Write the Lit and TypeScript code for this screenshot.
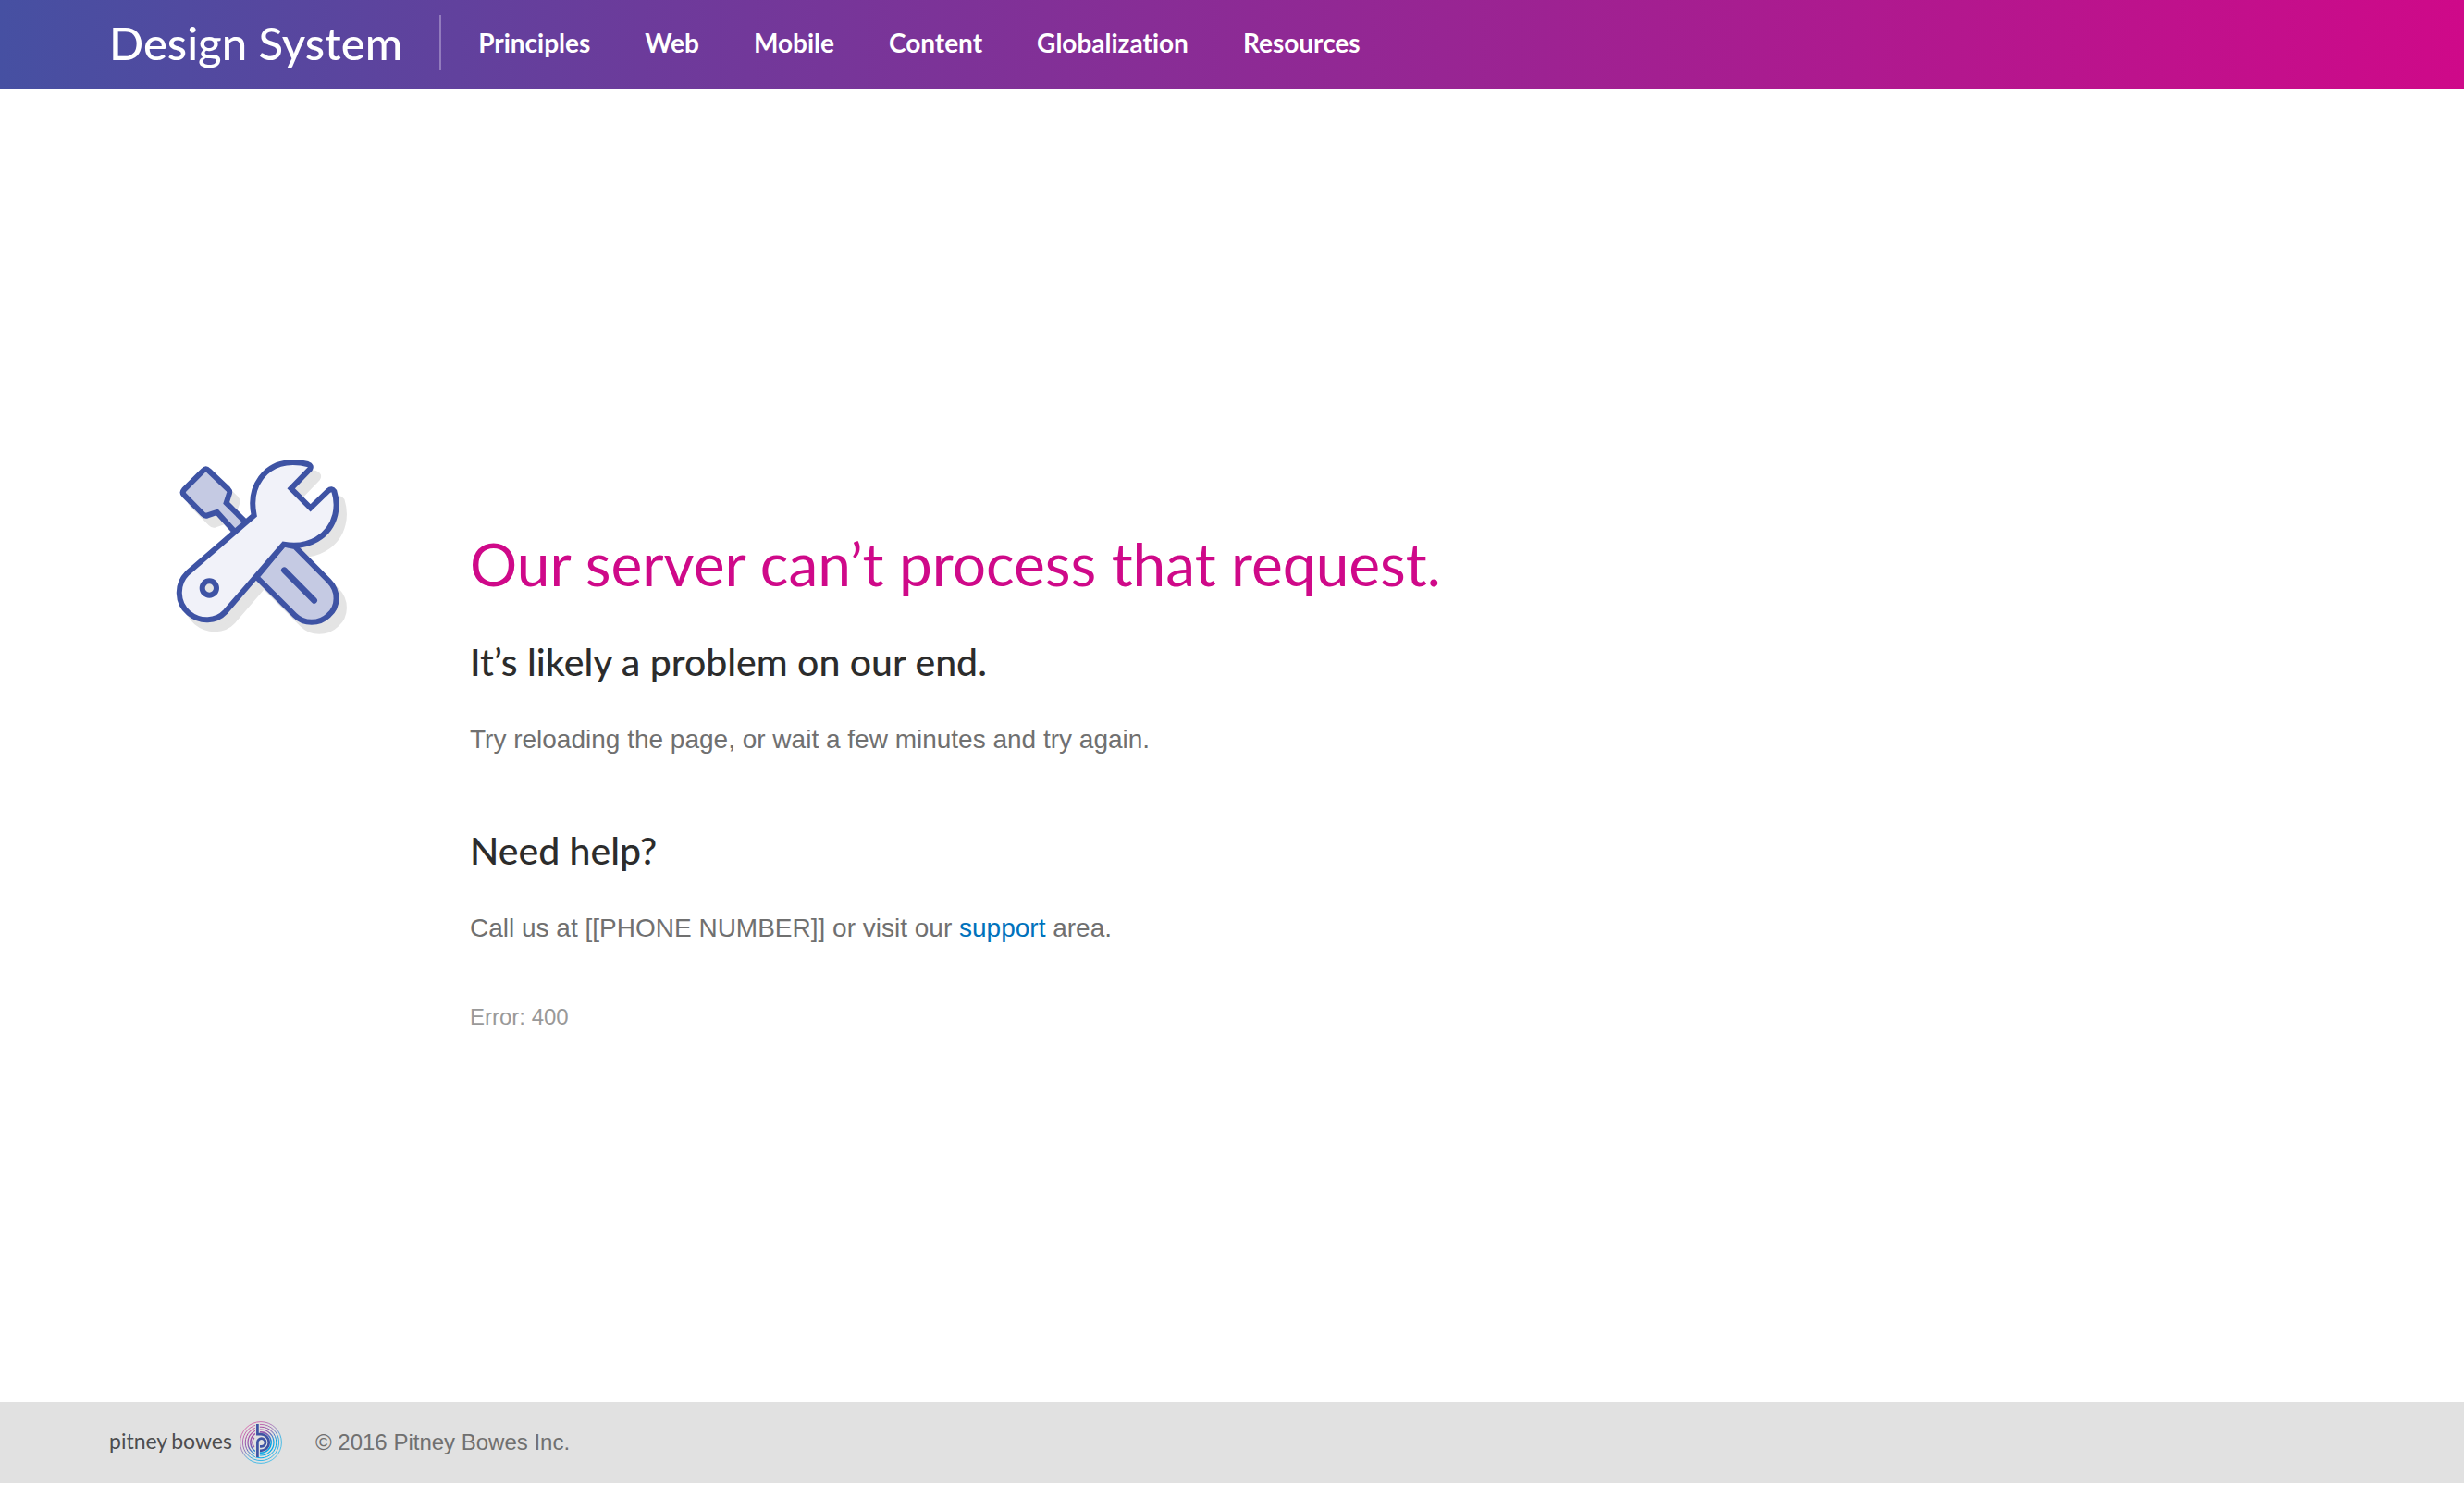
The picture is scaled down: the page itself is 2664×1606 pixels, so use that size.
import { LitElement, html, svg, css } from "lit";
import { customElement } from "lit/decorators.js";

const NAV_ITEMS = ["Principles", "Web", "Mobile", "Content", "Globalization", "Resources"];

const WRENCH =
  "M314 232 C294 138 350 61 440 60 C458 60 474 62 488 66 Q502 71 495 82 L434 145 L497 208 L555 152 Q566 142 574 154 C582 180 583 206 577 230 C560 300 490 341 410 326 L222 544 C190 578 140 580 102 549 C62 515 62 455 97 420 Z";
const BLADE =
  "M149 87 Q158 78 167 87 L230 147 Q236 153 234 160 L224 192 L290 257 L254 288 L194 222 L163 232 Q155 235 148 228 L87 166 Q79 158 87 149 Z";
const HANDLE =
  "M410 326 L446 333 L556 444 C590 478 588 528 556 556 C525 586 476 586 446 556 L322 432 Z";

@customElement("tools-icon")
export class ToolsIcon extends LitElement {
  static styles = css`
    :host {
      display: block;
    }
    .art {
      display: block;
      width: 186px;
      height: 191px;
    }
    .shadow {
      fill: #e4e4e4;
      stroke: #e4e4e4;
    }
    .tool {
      fill: #c5cae3;
      stroke: #3e53a4;
    }
    .wrench {
      fill: #f1f2f9;
      stroke: #3e53a4;
    }
    .hole {
      fill: #e4e4e4;
      stroke: #3e53a4;
    }
    .groove {
      stroke: #3e53a4;
      stroke-width: 20;
      stroke-linecap: round;
    }
  `;

  render() {
    return html`
      <svg class="art" viewBox="60 48 558 573" stroke-width="18" aria-hidden="true">
        <g class="shadow" transform="translate(25 30)">
          <path d=${BLADE} />
          <path d=${HANDLE} />
          <path d=${WRENCH} />
        </g>
        <path class="tool" d=${BLADE} />
        <path class="tool" d=${HANDLE} />
        <path class="groove" d="M412 410 L509 508" />
        <path class="wrench" d=${WRENCH} />
        <circle class="hole" cx="169" cy="468" r="23" />
      </svg>
    `;
  }
}

@customElement("brand-logo")
export class BrandLogo extends LitElement {
  static styles = css`
    :host {
      display: flex;
      align-items: center;
      gap: 8px;
      color: #4d4d4f;
      font: 400 23px/44px Lato, sans-serif;
    }
    .name {
      display: flex;
      gap: 4px;
      padding-bottom: 4px;
    }
    .mark {
      display: block;
      width: 46px;
      height: 46px;
    }
  `;

  render() {
    const rings = [
      [11.2, 1.4],
      [14, 1.2],
      [16.8, 1],
      [19.6, 0.8],
      [22.4, 0.7],
    ];
    return html`
      <span class="name"><span>pitney</span><span>bowes</span></span>
      <svg class="mark" viewBox="0 0 46 46" fill="none" aria-hidden="true">
        <defs>
          <linearGradient id="ring" gradientUnits="userSpaceOnUse" x1="10" y1="6" x2="34" y2="40">
            <stop offset="0" stop-color="#d0409a" />
            <stop offset="0.42" stop-color="#8058b0" />
            <stop offset="0.7" stop-color="#00a4e4" />
            <stop offset="1" stop-color="#10b0ea" />
          </linearGradient>
        </defs>
        ${rings.map(
          ([radius, width]) =>
            svg`<circle cx="23" cy="23" r=${radius} stroke="url(#ring)" stroke-width=${width} />`
        )}
        <path d="M19.4 3 V39" stroke="#e1e1e1" stroke-width="5" />
        <path d="M15.8 28.2 A8.8 8.8 0 0 1 15.8 17.8" stroke="#a05cab" stroke-width="1.4" />
        <path
          d="M19.4 3 V14.2 H23 A8.8 8.8 0 0 1 23 31.8 H22 M19.4 39 V23 A4.3 4.3 0 1 1 23.6 27.3 H22"
          stroke="#3e53a4"
          stroke-width="2.7"
        />
      </svg>
    `;
  }
}

@customElement("app-root")
export class AppRoot extends LitElement {
  static styles = css`
    :host {
      display: flex;
      flex-direction: column;
      box-sizing: border-box;
      min-height: 100vh;
      padding-bottom: 2px;
      background: #fff;
      color: #707070;
      font: 28px/40px "Liberation Sans", Arial, sans-serif;
    }
    a {
      color: inherit;
      text-decoration: none;
    }
    h1,
    h2,
    p {
      margin: 0;
    }
    .header {
      display: flex;
      align-items: center;
      height: 96px;
      padding: 0 118px;
      box-sizing: border-box;
      background: linear-gradient(90deg, #4650a2, #6c3b9b 26%, #cf0989);
      color: #fff;
      font-family: Lato, sans-serif;
    }
    .title {
      padding-right: 40px;
      margin: 0 40px 4px 0;
      border-right: 2px solid #927bbd;
      font-size: 49px;
      font-weight: 500;
      line-height: 60px;
      white-space: nowrap;
    }
    .nav {
      display: flex;
      gap: 59px;
      padding-bottom: 4px;
      font-size: 28px;
      font-weight: 700;
      font-variant-ligatures: none;
    }
    .main {
      display: flex;
      flex: 1;
      align-items: flex-start;
      gap: 132px;
      padding: 400px 190px 0;
    }
    .message {
      padding-top: 74px;
    }
    .headline {
      color: #cf0989;
      font: 400 64px/80px Lato, sans-serif;
    }
    .subhead {
      margin-top: 42px;
      color: #2c2c2c;
      font: 500 41px/48px Lato, sans-serif;
    }
    .copy {
      margin-top: 40px;
    }
    .copy + .subhead {
      margin-top: 76px;
    }
    .link {
      color: #0072bc;
    }
    .code {
      margin-top: 56px;
      color: #999;
      font-size: 24px;
    }
    .footer {
      display: flex;
      align-items: center;
      gap: 36px;
      height: 88px;
      padding: 0 118px;
      box-sizing: border-box;
      background: #e1e1e1;
      font-size: 24px;
    }
  `;

  render() {
    return html`
      <header class="header">
        <a class="title" href="#">Design System</a>
        <nav class="nav">${NAV_ITEMS.map((item) => html`<a href="#">${item}</a>`)}</nav>
      </header>
      <main class="main">
        <tools-icon></tools-icon>
        <div class="message">
          <h1 class="headline">Our server can’t process that request.</h1>
          <h2 class="subhead">It’s likely a problem on our end.</h2>
          <p class="copy">Try reloading the page, or wait a few minutes and try again.</p>
          <h2 class="subhead">Need help?</h2>
          <p class="copy">
            Call us at [[PHONE NUMBER]] or visit our <a class="link" href="#">support</a> area.
          </p>
          <p class="code">Error: 400</p>
        </div>
      </main>
      <footer class="footer">
        <brand-logo></brand-logo>
        <span>© 2016 Pitney Bowes Inc.</span>
      </footer>
    `;
  }
}
